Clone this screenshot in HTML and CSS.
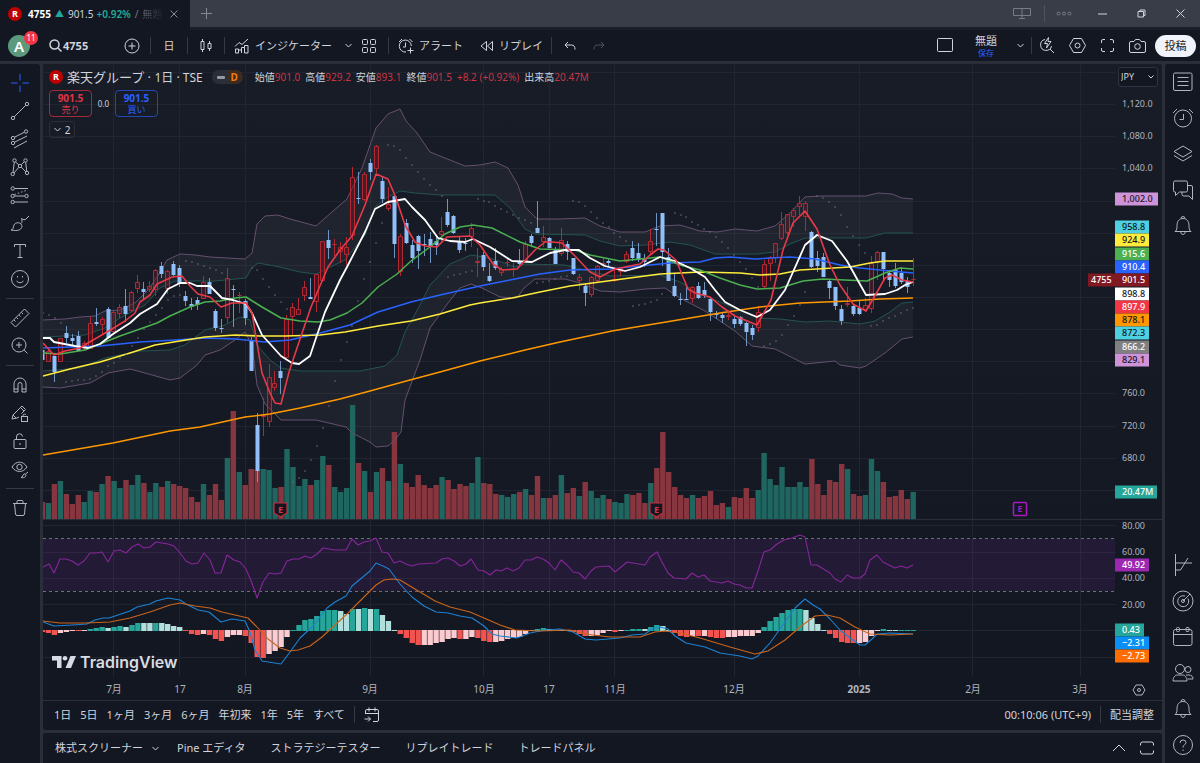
FILE: index.html
```html
<!DOCTYPE html>
<html lang="ja">
<head>
  <meta charset="UTF-8">
  <meta name="viewport" content="width=device-width, initial-scale=1.0">
  <title>4755 901.5 +0.92%</title>
  <link rel="stylesheet" href="styles.css">
</head>
<body>

<header class="tabbar">
  <div class="tab">
    <span class="logo-r">R</span>
    <b>4755</b>
    <span class="tab-up">▲</span>
    <span class="tab-price">901.5</span>
    <span class="tab-change">+0.92%</span>
    <span class="tab-slash">/</span>
    <span class="tab-name">無題</span>
    <button class="tab-close" aria-label="閉じる"><svg width="8" height="8" viewBox="0 0 8 8"><path d="M.5.5l7 7M7.5.5l-7 7"/></svg></button>
  </div>
  <button class="tab-add" aria-label="新しいタブ"><svg width="11" height="11" viewBox="0 0 11 11"><path d="M5.5 0v11M0 5.5h11"/></svg></button>
  <div class="window-buttons">
    <button class="wb-monitor" aria-label="モニター"><svg width="20" height="13" viewBox="0 0 20 13"><path d="M1.5 1.500h17v7h-17zM10 1.500v10M7 11.500h6"/></svg></button>
    <span class="wb-sep"></span>
    <button class="wb-more" aria-label="メニュー"><svg width="16" height="5" viewBox="0 0 16 5"><circle cx="2.500" cy="2.500" r="1.500"/><circle cx="8" cy="2.500" r="1.500"/><circle cx="13.500" cy="2.500" r="1.500"/></svg></button>
    <button class="wb" aria-label="最小化"><svg width="9" height="9" viewBox="0 0 9 9"><path d="M0 5h9"/></svg></button>
    <button class="wb" aria-label="元に戻す"><svg width="9" height="9" viewBox="0 0 9 9"><path d="M1 2.500h5.500V8H1zM3 2.500V1h5v5.500H6.500"/></svg></button>
    <button class="wb" aria-label="ウィンドウを閉じる"><svg width="9" height="9" viewBox="0 0 9 9"><path d="M.5.5l8 8M8.500.5l-8 8"/></svg></button>
  </div>
</header>

<nav class="toolbar">
  <div class="avatar-box"><span class="avatar">A</span><span class="avatar-count">11</span></div>
  <button class="search"><svg width="13" height="13" viewBox="0 0 13 13" stroke-width="1.500"><circle cx="5.500" cy="5.500" r="4.500"/><path d="M9 9l3.500 3.500"/></svg><b>4755</b></button>
  <button class="tb" aria-label="比較"><svg width="16" height="16" viewBox="0 0 16 16"><circle cx="8" cy="8" r="7"/><path d="M8 4.500v7M4.500 8h7"/></svg></button>
  <span class="sep"></span>
  <button class="tb">日</button>
  <span class="sep"></span>
  <button class="tb" aria-label="ローソク足"><svg width="12" height="15" viewBox="0 0 12 15"><path d="M1 3.500h3v8H1zM2.500 1v2.500M2.500 11.500V14M8 5.500h3v5H8zM9.500 3v2.500M9.500 10.500V13"/></svg></button>
  <span class="sep"></span>
  <button class="tb-text"><svg width="16" height="16" viewBox="0 0 16 16"><path d="M1.500 15v-4h3v4zM4.500 15v-3h3v3M7.500 15V9.500h3V15M10.500 15V7.500H14V15zM1 8.500l4-4 3 2L14 1"/></svg>インジケーター</button>
  <button class="tb-chevron" aria-label="お気に入り"><svg width="7" height="5" viewBox="0 0 7 5"><path d="M.5 1l3 3 3-3"/></svg></button>
  <button class="tb-grid" aria-label="テンプレート"><svg width="14" height="14" viewBox="0 0 14 14"><rect x=".5" y=".5" width="5" height="5" rx="1"/><rect x="8.500" y=".5" width="5" height="5" rx="1"/><rect x=".5" y="8.500" width="5" height="5" rx="1"/><rect x="8.500" y="8.500" width="5" height="5" rx="1"/></svg></button>
  <span class="sep"></span>
  <button class="tb-text"><svg width="16" height="16" viewBox="0 0 16 16"><path d="M13.300 8A6 6 0 1 0 8 14M7.500 4.500V9H5M12.500 9.500v6M9.500 12.500h6M1 4l3-3M14.500 4l-3-3"/></svg>アラート</button>
  <button class="tb-text"><svg width="14" height="12" viewBox="0 0 14 12"><path d="M6.500 1.500v9L1 6zM12.500 1.500v9L7.500 6z"/></svg>リプレイ</button>
  <span class="sep"></span>
  <button class="tb" aria-label="元に戻す"><svg width="12" height="9" viewBox="0 0 12 9"><path d="M4 1L1 4l3 3M1 4h6.500Q11 4 11 8.500"/></svg></button>
  <button class="tb-redo" aria-label="やり直す"><svg width="12" height="9" viewBox="0 0 12 9"><path d="M8 1l3 3-3 3M11 4H4.500Q1 4 1 8.500"/></svg></button>

  <div class="toolbar-right">
    <button class="tb" aria-label="レイアウト"><svg width="16" height="15" viewBox="0 0 16 15"><rect x=".5" y=".5" width="15" height="13" rx="1"/></svg></button>
    <button class="layout-name"><span>無題</span><span class="save">保存</span></button>
    <button class="tb-chevron" aria-label="レイアウト一覧"><svg width="7" height="5" viewBox="0 0 7 5"><path d="M.5 1l3 3 3-3"/></svg></button>
    <span class="sep"></span>
    <button class="tbr" aria-label="クイック検索"><svg width="16" height="17" viewBox="0 0 16 17"><path d="M6 2.500a5.500 5.500 0 1 0 6.500 6.500M11 12l4 4M9.500.5L5.500 6.500h3l-1 4.500 4.500-6.500H9z"/></svg></button>
    <button class="tbr" aria-label="設定"><svg width="17" height="15" viewBox="0 0 17 15"><path d="M4.500.5h8l4 7-4 7h-8l-4-7z"/><circle cx="8.500" cy="7.500" r="2.500"/></svg></button>
    <button class="tbr" aria-label="全画面"><svg width="13" height="13" viewBox="0 0 13 13"><path d="M.5 4V2Q.5.5 2 .5h2M9 .5h2Q12.500.5 12.500 2v2M12.500 9v2q0 1.500-1.500 1.500H9M4 12.500H2Q.5 12.500.5 11V9"/></svg></button>
    <button class="tbr" aria-label="スナップショット"><svg width="17" height="14" viewBox="0 0 17 14"><path d="M2 2.500h3l1.500-2h4l1.500 2h3q1.500 0 1.500 1.500v8q0 1.500-1.500 1.500H2Q.5 13.500.5 12V4Q.5 2.500 2 2.500z"/><circle cx="8.500" cy="7.500" r="2.800"/></svg></button>
    <button class="publish">投稿</button>
  </div>
</nav>

<div class="workspace">
  <aside class="drawing-tools">
    <button class="cross" aria-label="十字カーソル"><svg width="20" height="20" viewBox="0 0 20 20"><path d="M10 1v6.500M10 12.500V19M1 10h6.500M12.500 10H19"/></svg></button>
    <button aria-label="トレンドライン"><svg width="20" height="20" viewBox="0 0 20 20"><circle cx="3" cy="17" r="1.700"/><circle cx="17" cy="3" r="1.700"/><path d="M4.200 15.800L15.800 4.200"/></svg></button>
    <button aria-label="フィボナッチ"><svg width="20" height="20" viewBox="0 0 20 20"><circle cx="3" cy="9" r="1.700"/><circle cx="16" cy="2.500" r="1.700"/><circle cx="3" cy="14" r="1.700"/><path d="M4.500 8.200l10-5M4.500 13.200L17 7M4 19l13-7"/></svg></button>
    <button aria-label="パターン"><svg width="20" height="20" viewBox="0 0 20 20"><circle cx="4.500" cy="3.500" r="1.700"/><circle cx="15.500" cy="3.500" r="1.700"/><circle cx="2.700" cy="17" r="1.700"/><circle cx="10" cy="9" r="1.700"/><circle cx="17" cy="16" r="1.700"/><path d="M4.300 5.200L3 15.300M5.500 5l3.300 2.800M14.300 4.700l-3 3M15.700 5.200l1 9M4 16l4.800-5.700M11.300 10.200l4.500 4.600"/></svg></button>
    <button aria-label="予測"><svg width="20" height="20" viewBox="0 0 20 20"><circle cx="2.700" cy="3.500" r="1.700"/><circle cx="2.700" cy="11" r="1.700"/><circle cx="2.700" cy="17" r="1.700"/><circle cx="16.500" cy="11" r="1.700"/><path d="M4.500 3.500H18M4.500 11h10M4.500 17H18"/><path d="M4.500 9.500L16 5.500" stroke-dasharray="1.500 2"/></svg></button>
    <button aria-label="ブラシ"><svg width="20" height="20" viewBox="0 0 20 20"><path d="M1 17c2.500-.5 2-2.500 3-5 1-2.500 5-3 7-1s.5 5-2 6c-2.500.8-5 .5-8 0zM11 10.500c1.500-1 1-3.500.5-5 1.500 1 3.500 2 4.500.5L19 3"/></svg></button>
    <button aria-label="テキスト"><svg width="20" height="20" viewBox="0 0 20 20"><path d="M4.500 6V3.500h11V6M10 3.500v13M7.500 16.500h5"/></svg></button>
    <button aria-label="絵文字"><svg width="20" height="20" viewBox="0 0 20 20"><circle cx="10" cy="10" r="8.500"/><path d="M6.500 12q3.500 3.500 7 0M7.500 7v1.500M12.500 7v1.500"/></svg></button>
    <hr>
    <button aria-label="ものさし"><svg width="20" height="20" viewBox="0 0 20 20"><path d="M1 14.500L14.500 1 19 5.500 5.500 19zM4 12l1.500 1.500M6.500 9.500L8 11M9 7l1.500 1.500M11.500 4.500L13 6"/></svg></button>
    <button aria-label="ズームイン"><svg width="20" height="20" viewBox="0 0 20 20"><circle cx="9" cy="9" r="7"/><path d="M14 14l3.500 3.500M9 6v6M6 9h6"/></svg></button>
    <hr>
    <button aria-label="マグネット"><svg width="20" height="20" viewBox="0 0 20 20"><path d="M4 17V9a6 6 0 0 1 12 0v8h-4V9.500a2 2 0 0 0-4 0V17zM4 14h4M12 14h4"/></svg></button>
    <button aria-label="描画モードを維持"><svg width="20" height="20" viewBox="0 0 20 20"><path d="M9 14l-2 1-5 1 1-4 9-9 3.500 3.500-4 4M10.500 4.500L14 8M3 12l3 3"/><rect x="11.500" y="13.500" width="6" height="5"/><path d="M13 13.500v-1.500a1.700 1.700 0 0 1 3 0"/></svg></button>
    <button aria-label="ロック"><svg width="20" height="20" viewBox="0 0 20 20"><rect x="4" y="8.500" width="12" height="9" rx="1"/><path d="M6.500 8.500V6a3 3 0 0 1 6-.5M10 12v2"/></svg></button>
    <button aria-label="描画を隠す"><svg width="20" height="20" viewBox="0 0 20 20"><path d="M2 8c4-6.500 11-6.500 15 0-4 6-11 6-15 0z"/><circle cx="9.500" cy="8" r="2.700"/><path d="M11 18.500c2 0 1.500-3 3-3.500s2.500 1 1.500 2.500-3 1.300-4.500 1zM15.500 15l2.500-2"/></svg></button>
    <hr>
    <button aria-label="削除"><svg width="20" height="20" viewBox="0 0 20 20"><path d="M3 5.500h14M7 5V3.500q0-1 1-1h4q1 0 1 1V5M4.500 5.500l1 10.500q.2 1.500 1.500 1.500h6q1.300 0 1.500-1.500l1-10.500"/></svg></button>
  </aside>

  <main class="center">
    <section class="chart-panel">
      <svg id="chart" class="chart"></svg>

      <div class="legend">
        <div class="legend-title">
          <span class="logo-r">R</span>
          <h1>楽天グループ · <span>1日 · TSE</span></h1>
          <span class="status"><i></i><b>D</b></span>
          <span class="ohlc">始値<em>901.0</em></span>
          <span class="ohlc">高値<em>929.2</em></span>
          <span class="ohlc">安値<em>893.1</em></span>
          <span class="ohlc">終値<em>901.5</em></span>
          <span class="ohlc"><em>+8.2 (+0.92%)</em></span>
          <span class="ohlc">出来高<em>20.47M</em></span>
        </div>
        <div class="trade">
          <button class="sell"><b>901.5</b><span>売り</span></button>
          <span class="spread">0.0</span>
          <button class="buy"><b>901.5</b><span>買い</span></button>
        </div>
        <button class="collapse"><svg width="7" height="5" viewBox="0 0 7 5"><path d="M.5 1l3 3 3-3"/></svg>2</button>
      </div>

      <div class="currency">
        <select aria-label="通貨"><option>JPY</option></select>
        <svg width="6" height="4" viewBox="0 0 6 4"><path d="M.5.5L3 3 5.500.5"/></svg>
      </div>

      <div class="brand">
        <svg width="24" height="14" viewBox="0 0 24 14"><path d="M0 1h9.500v12H5V5.500H0zM18.500 1H24l-5 12h-5.500z"/><circle cx="13" cy="3.300" r="2.300"/></svg>
        TradingView
      </div>

      <div class="range-bar">
        <button>1日</button>
        <button>5日</button>
        <button>1ヶ月</button>
        <button>3ヶ月</button>
        <button>6ヶ月</button>
        <button>年初来</button>
        <button>1年</button>
        <button>5年</button>
        <button>すべて</button>
        <span class="sep"></span>
        <button aria-label="日付へ移動"><svg width="16" height="16" viewBox="0 0 16 16"><path d="M1.500 7V4Q1.500 2.500 3 2.500h10q1.500 0 1.500 1.500v9q0 1.500-1.500 1.500H9M1.500 6.500h13M5 .5v4M11 .5v4M.5 12h6M4 9.500L6.500 12 4 14.500"/></svg></button>
        <button class="clock">00:10:06 (UTC+9)</button>
        <span class="sep"></span>
        <button>配当調整</button>
      </div>
    </section>

    <footer class="bottom-panel">
      <button class="screener">株式スクリーナー<svg width="7" height="5" viewBox="0 0 7 5"><path d="M.5 1l3 3 3-3"/></svg></button>
      <button>Pine エディタ</button>
      <button>ストラテジーテスター</button>
      <button>リプレイトレード</button>
      <button>トレードパネル</button>
      <button class="panel-up" aria-label="パネルを開く"><svg width="14" height="8" viewBox="0 0 14 8"><path d="M1 7l6-6 6 6"/></svg></button>
      <button aria-label="パネルを最大化"><svg width="14" height="14" viewBox="0 0 14 14"><path d="M.5 4.500V3Q.5 1 2.500 1h9q2 0 2 2v1.500M13.500 9.500V11q0 2-2 2h-9q-2 0-2-2V9.500"/></svg></button>
    </footer>
  </main>

  <aside class="widgets">
    <button aria-label="ウォッチリスト"><svg width="22" height="22" viewBox="0 0 22 22"><rect x="1.500" y="2" width="18.500" height="17.500" rx="1.500"/><path d="M5.500 6.500h11M5.500 10.500h11M5.500 14.500h11"/></svg></button>
    <button aria-label="アラート"><svg width="22" height="22" viewBox="0 0 22 22"><circle cx="11" cy="11.500" r="8.500"/><path d="M11.500 7v5.500H7.500M1 6l4-4M21 6l-4-4"/></svg></button>
    <button aria-label="オブジェクトツリー"><svg width="22" height="22" viewBox="0 0 22 22"><path d="M2 8.500L11 3l9 5.500-9 5.500zM2 12.500l9 5.500 9-5.500"/></svg></button>
    <button aria-label="チャット"><svg width="22" height="22" viewBox="0 0 22 22"><path d="M3 2h11q1.500 0 1.500 1.500v8q0 1.500-1.500 1.500H7.500l-4 3.500V13H3q-1.500 0-1.500-1.500v-8Q1.500 2 3 2zM15.500 6.500H19q1.500 0 1.500 1.500v12.500L17 17h-5q-2 0-2-1.500V13"/></svg></button>
    <button aria-label="通知"><svg width="22" height="22" viewBox="0 0 22 22"><path d="M3 16.500c2-1.500 2-3.500 2-6C5 6 7.500 3.500 11 3.500s6 2.500 6 7c0 2.500 0 4.500 2 6zM9 3.500q0-2 2-2t2 2M8.500 16.500q.5 3 2.500 3t2.500-3"/></svg></button>
    <span class="widgets-space"></span>
    <button aria-label="スーパーチャート"><svg width="22" height="22" viewBox="0 0 22 22"><path d="M3.500 0v22M3.500 9H20M3.500 16h5L16 4"/></svg></button>
    <button aria-label="レーダー"><svg width="22" height="22" viewBox="0 0 22 22"><circle cx="11" cy="11" r="10"/><path d="M16 8.500a5.500 5.500 0 1 1-3-2.500M11 11l7-7"/><circle cx="11" cy="11" r="1.500"/></svg></button>
    <button aria-label="カレンダー"><svg width="22" height="22" viewBox="0 0 22 22"><rect x="1.500" y="3.500" width="18.500" height="16" rx="2"/><path d="M1.500 8.500H20"/><rect x="4.500" y="1.500" width="3" height="4" rx="1"/><rect x="14" y="1.500" width="3" height="4" rx="1"/></svg></button>
    <button aria-label="コミュニティ"><svg width="22" height="22" viewBox="0 0 22 22"><circle cx="8" cy="7" r="4.500"/><circle cx="16" cy="7.500" r="3"/><path d="M1 19c0-3.500 2-6 4.500-6h5c2.500 0 4.500 2.500 4.500 6zM14 13h3c2.500 0 4 1.500 4 4h-5.500"/></svg></button>
    <button aria-label="お知らせ"><svg width="22" height="22" viewBox="0 0 22 22"><path d="M3 16.500c2-1.500 2-3.500 2-6C5 6 7.500 3.500 11 3.500s6 2.500 6 7c0 2.500 0 4.500 2 6zM9 3.500q0-2 2-2t2 2M8.500 16.500q.5 3 2.500 3t2.500-3"/></svg></button>
    <button aria-label="ヘルプ"><svg width="22" height="22" viewBox="0 0 22 22"><circle cx="11" cy="11" r="9.500"/><path d="M8 9q0-3 3-3t3 2.500q0 1.500-1.500 2.300T11 13.500M11 15.500V17"/></svg></button>
  </aside>
</div>

<script src="chart.js"></script>
</body>
</html>
```

FILE: styles.css
```css
* {
  box-sizing: border-box;
}
body {
  margin: 0;
  min-height: 100vh;
  display: flex;
  flex-direction: column;
  background: #2a2e39;
  color: #d1d4dc;
  font-family: "Noto Sans", "Noto Sans CJK JP", sans-serif;
  font-size: 11px;
  line-height: 16px;
}
button {
  display: flex;
  align-items: center;
  justify-content: center;
  flex: none;
  margin: 0;
  padding: 0;
  border: none;
  background: none;
  color: inherit;
  font: inherit;
  white-space: nowrap;
  cursor: pointer;
}
svg {
  display: block;
  flex: none;
  fill: none;
  stroke: currentColor;
}
.sep {
  flex: none;
  width: 1px;
  height: 17px;
  background: #363a45;
}
.logo-r {
  flex: none;
  width: 14px;
  height: 14px;
  border-radius: 50%;
  background: #bf0000;
  color: #fff;
  font-size: 9px;
  font-weight: 700;
  line-height: 14px;
  text-align: center;
}

/* window tabs */
.tabbar {
  display: flex;
  height: 30px;
  background: #383d47;
  border-bottom: 3px solid #1a1e28;
}
.tab {
  display: flex;
  align-items: center;
  gap: 4px;
  width: 190px;
  height: 30px;
  padding: 0 12px 3px 8px;
  background: #131722;
  color: #fff;
  font-size: 10px;
}
.tab b {
  margin-left: 2px;
}
.tab-up {
  color: #26a69a;
  font-size: 9px;
}
.tab-price {
  color: #d1d4dc;
}
.tab-change {
  margin-left: -1px;
  color: #22ab94;
  font-weight: 600;
}
.tab-slash {
  color: #787b86;
}
.tab-name {
  background: linear-gradient(to right, #5d606b, #1e222d);
  -webkit-background-clip: text;
  background-clip: text;
  color: transparent;
}
.tab-close {
  margin-left: auto;
  color: #868993;
}
.tab-add {
  width: 32px;
  color: #868993;
}
.window-buttons {
  display: flex;
  align-items: center;
  margin-left: auto;
}
.wb-monitor {
  width: 44px;
  color: #787b86;
}
.wb-sep {
  width: 1px;
  height: 17px;
  background: #50535e;
}
.wb-more {
  width: 38px;
  color: #787b86;
}
.wb {
  width: 39px;
  height: 27px;
  color: #d1d4dc;
}

/* top toolbar */
.toolbar {
  display: flex;
  align-items: center;
  height: 31px;
  margin-bottom: 3px;
  background: #131722;
}
.avatar-box {
  position: relative;
  width: 40px;
  padding-left: 8px;
}
.avatar {
  display: block;
  width: 22px;
  height: 22px;
  border-radius: 50%;
  background: #5b9a7d;
  color: #fff;
  font-size: 15px;
  font-weight: 600;
  line-height: 22px;
  text-align: center;
}
.avatar-count {
  position: absolute;
  top: -4px;
  left: 24px;
  width: 14px;
  height: 14px;
  border-radius: 50%;
  background: #f23645;
  color: #fff;
  font-size: 8px;
  line-height: 14px;
  text-align: center;
}
.search {
  justify-content: flex-start;
  gap: 1px;
  width: 74px;
  padding-left: 9px;
}
.tb {
  width: 36px;
  height: 30px;
}
.tb-text {
  gap: 5px;
  padding: 0 8px 0 9px;
}
.tb-chevron {
  width: 16px;
}
.tb-grid {
  width: 26px;
  margin-right: 6px;
}
.tb-redo {
  width: 22px;
  color: #50535e;
}
.toolbar-right {
  display: flex;
  align-items: center;
  margin-left: auto;
  padding-right: 4px;
}
.toolbar-right .tb-chevron {
  width: 22px;
}
.layout-name {
  flex-direction: column;
  width: 46px;
  line-height: 13px;
}
.save {
  color: #2962ff;
  font-size: 8px;
  line-height: 11px;
}
.tbr {
  width: 30px;
}
.publish {
  width: 41px;
  height: 22px;
  margin-left: 3px;
  border-radius: 11px;
  background: #f0f3fa;
  color: #131722;
}

/* main area */
.workspace {
  display: flex;
  flex: 1;
  gap: 3px;
}
.drawing-tools,
.widgets {
  display: flex;
  flex-direction: column;
  align-items: center;
  background: #131722;
  color: #b2b5be;
}
.drawing-tools {
  width: 40px;
  padding: 5px 1px 0 0;
  border-radius: 0 3px 0 0;
}
.drawing-tools button {
  width: 39px;
  height: 28px;
}
.drawing-tools hr {
  width: 28px;
  height: 1px;
  margin: 5px 0;
  border: none;
  background: #363a45;
}
.drawing-tools .cross {
  color: #2962ff;
}
.widgets {
  width: 35px;
  border-radius: 3px 0 0 0;
}
.widgets button {
  width: 35px;
  height: 36px;
}
.widgets-space {
  flex: 1;
}
.center {
  display: flex;
  flex-direction: column;
  flex: 1;
  gap: 3px;
  min-width: 0;
}

/* chart */
.chart-panel {
  position: relative;
  display: flex;
  flex-direction: column;
  border-radius: 3px;
  background: #131722;
}
.chart {
  width: 100%;
  height: 636px;
  border-radius: 3px;
  background: linear-gradient(#181c27, #131722);
}
.legend {
  position: absolute;
  top: 4px;
  left: 6px;
}
.legend-title {
  display: flex;
  align-items: center;
  gap: 5px;
  height: 18px;
  margin-bottom: 4px;
  font-size: 10px;
  white-space: nowrap;
}
.legend-title h1 {
  margin: 0 4px 0 -1px;
  font-size: 13px;
  font-weight: 400;
}
.legend-title h1 span {
  font-size: 12px;
}
.status {
  display: flex;
  align-items: center;
  justify-content: space-between;
  width: 31px;
  height: 14px;
  margin-right: 7px;
  padding: 0 5px;
  border-radius: 7px;
  background: linear-gradient(to right, #2a2e39 50%, #3a2c21 50%);
}
.status i {
  width: 8px;
  height: 3px;
  border-radius: 1px;
  background: #9598a1;
}
.status b {
  color: #f57c00;
}
.ohlc em {
  color: #c93545;
  font-style: normal;
}
.trade {
  display: flex;
  align-items: center;
  margin-bottom: 4px;
}
.sell,
.buy {
  flex-direction: column;
  width: 43px;
  height: 27px;
  border: 1px solid #a32a38;
  border-radius: 4px;
  color: #e03444;
  font-size: 9px;
  line-height: 11px;
}
.sell b,
.buy b {
  font-size: 10px;
}
.buy {
  border-color: #2148b3;
  color: #2962ff;
}
.spread {
  width: 23px;
  font-size: 8px;
  text-align: center;
}
.collapse {
  gap: 4px;
  width: 26px;
  height: 17px;
  border: 1px solid #2a2e39;
  border-radius: 3px;
  font-size: 10px;
}
.currency {
  position: absolute;
  top: 3px;
  right: 4px;
}
.currency select {
  display: block;
  width: 40px;
  height: 20px;
  padding: 0 2px;
  border: 1px solid #2f333f;
  border-radius: 3px;
  background: #131722;
  color: #d1d4dc;
  font: inherit;
  font-size: 9px;
  appearance: none;
}
.currency svg {
  position: absolute;
  top: 8px;
  right: 4px;
}
.brand {
  position: absolute;
  top: 586px;
  left: 9px;
  display: flex;
  align-items: center;
  gap: 4px;
  color: #d8dbe3;
  font-family: Inter, sans-serif;
  font-size: 16px;
  font-weight: 600;
  line-height: 24px;
}
.brand svg {
  fill: currentColor;
  stroke: none;
}
.range-bar {
  display: flex;
  align-items: center;
  gap: 9px;
  height: 30px;
  padding: 0 8px 2px 11px;
  border-top: 1px solid #2a2e39;
}
.range-bar .clock {
  margin-left: auto;
}

/* bottom tabs */
.bottom-panel {
  display: flex;
  align-items: center;
  flex: 1;
  gap: 25px;
  min-height: 30px;
  padding: 0 8px 0 12px;
  border-radius: 3px 3px 0 0;
  background: #131722;
}
.screener {
  gap: 9px;
  margin-right: -7px;
}
.panel-up {
  margin-left: auto;
  margin-right: -11px;
}

/* svg parts */
.grid {
  stroke: #212531;
}
.dots circle {
  fill: #6d707b;
  stroke: none;
}
.band {
  fill: rgba(145, 160, 160, 0.07);
  stroke: none;
}
.line {
  stroke-linejoin: round;
}
.vol-up {
  fill: #1f6560;
  stroke: none;
}
.vol-down {
  fill: #87363f;
  stroke: none;
}
.candle-up {
  fill: rgba(128, 20, 34, 0.4);
  stroke: #b22833;
}
.candle-down {
  fill: #90bff9;
  stroke: none;
}
.wick-down {
  stroke: #6f94c2;
}
.chart text {
  stroke: none;
  fill: #b2b5be;
  font-size: 9px;
}
.chart .tag-text {
  font-weight: 500;
}
.chart .time {
  font-size: 10px;
  text-anchor: middle;
}
.chart .year {
  font-weight: 700;
}
.chart .event {
  font-weight: 700;
  text-anchor: middle;
}
```

FILE: chart.js
```js
const svg = document.getElementById("chart");
const RIGHT = 1162, TOP = 64, HEIGHT = 636, AXIS = 1115;
const width = svg.clientWidth;
const LEFT = RIGHT - width;
svg.setAttribute("viewBox", `${LEFT} ${TOP} ${width} ${HEIGHT}`);

const barX = i => 42.4 + i * 5.964;
let out = "";

// [direction, high, body top, body bottom, low]
const candles = `d350,350,360,360 u348,351,362,362 d356,356,372,382 u338,338,362,362 d326,333,338,343 d334,338,341,345
d331,336,351,351 u341,343,348,350 u317,323,349,349 d308,322,324,326 u317,319,325,334 d307,309,338,338
u310,312,332,334 u304,307,314,318 d289,306,314,322 u291,292,311,312 u275,282,289,293 d282,289,292,299
u281,286,290,292 u269,270,290,296 d262,266,274,278 u270,271,289,294 d261,264,275,277 d265,268,284,287
d291,296,301,306 d298,304,307,310 d297,300,305,310 u276,282,299,299 d278,282,294,294 d309,311,328,331
d319,328,329,333 u268,278,318,323 d285,289,290,327 u292,295,296,313 d299,301,318,325 d337,341,371,371
d413,425,471,482 u398,415,417,436 u364,377,422,427 u371,383,388,391 d361,371,378,394 u315,319,358,358
u303,307,317,335 u298,309,315,315 u281,287,296,301 d278,297,299,299 u274,274,302,312 u241,241,281,282
d230,240,248,259 u239,244,245,256 u242,247,252,263 u237,247,255,265 u167,177,236,240 d172,198,199,204
u172,174,200,201 d159,163,172,180 u145,146,169,173 d177,181,199,203 u187,204,209,211 d194,196,244,258
u234,236,272,276 d219,223,243,244 d240,245,258,263 d235,236,251,269 d234,244,245,256 d232,239,247,263
d237,241,245,255 u217,231,235,242 d199,212,225,227 d215,216,233,234 d237,242,250,253 d238,243,244,251
u223,228,237,247 u248,261,263,277 d252,255,267,271 d263,276,281,282 d248,261,268,270 u267,269,273,276
u257,262,263,267 u263,269,270,277 d249,262,264,265 u241,244,261,261 d234,236,243,247 d201,228,233,233
u226,237,242,247 d237,238,248,248 d247,250,264,264 u228,240,254,256 d241,244,252,260 d258,258,274,275
u274,277,281,290 d283,286,293,306 u276,277,295,297 u265,266,281,283 u258,263,266,268 d258,261,263,267
u267,279,281,282 u267,268,272,276 u251,254,262,263 d241,248,258,261 d243,253,260,262 d254,258,262,267
u229,241,252,254 d213,229,230,246 d213,213,252,266 d248,257,281,281 d274,286,296,297 d293,299,300,305
d287,299,300,300 u286,287,299,303 d282,286,298,299 d282,290,295,298 d297,299,312,321 d311,314,315,319
d313,315,318,323 u313,315,317,320 d316,319,324,328 d316,317,324,326 d322,323,332,346 d325,328,335,340
u306,312,328,332 u260,264,287,288 u256,257,264,281 u243,243,258,263 u212,224,239,240 u214,214,233,235
u208,210,217,227 u196,203,207,215 u201,203,217,231 d231,232,267,268 d251,258,266,272 d253,257,277,277
d279,281,288,299 d287,287,306,310 d305,309,321,325 u287,303,305,307 d304,306,314,316 d300,308,314,315
u298,305,310,312 u256,263,309,313 u251,252,262,280 d252,252,269,280 d270,273,280,287 d263,270,286,288
d267,273,282,284 d277,281,287,293 u258,279,280,286`.split(/\s+/);

const volumes = `r502 g503 r484 g481 r494 r504 r495 g502 g491 r492 g484 r476 g481 g488 r480 g485 g475 r483 g492 g483
r487 g481 r484 r486 r488 r497 r502 g484 r495 r484 r500 g458 r411 g472 r485 r469 r470 g469 g470 g488
r487 g449 g467 g486 g479 r485 g480 g456 r465 g487 g492 g488 g405 r463 g471 r492 g472 r468 g481 r432
g464 r483 r487 r475 r485 r488 r485 g477 r480 r489 r484 r486 g483 g457 r483 r484 r494 g495 g497 g494
r492 g489 r495 r476 g498 r498 r495 g475 r493 r488 g496 r482 g491 g498 g495 r499 g502 g503 g494 r495
r493 r503 g483 r468 r432 r472 r487 r495 r498 g495 r498 r496 r491 r505 r503 g507 r497 r498 r488 r498
g490 g453 g479 g485 g467 g487 g487 g482 g487 r459 r484 r495 r480 r482 r464 g469 r494 r496 g495 g459
g471 r482 r497 r496 r490 r499 g492`.split(/\s+/);

// T/t: above zero rising/falling, R/p: below zero falling/rising
const hist = `R2 R3 R5 p3 p2 p1 R1 p1 T2 T3 T4 t3 T4 T5 t4 T6 T8 t8 t8 T8 t8 t7 t5 t4 R1 R4 R5 p4 R5 R9 R11 p7 p5 p5
R6 R13 R27 R28 p24 p21 p17 p7 T1 T6 T11 T12 T15 T20 T21 T21 t20 t17 T22 t22 T23 t22 T22 t16 t10 t1
R4 R8 R13 R15 p15 p15 p13 p12 p9 p8 R9 p9 p7 R8 R11 R12 p12 p11 p9 p8 p7 p4 p1 T2 T3 t2 t1 t1 p1 R2
R4 R6 p6 p5 p3 p1 R2 p1 T1 T2 T2 t2 T4 T6 t5 t1 R3 R6 R7 p6 R6 p6 R7 R8 R8 p7 p7 p6 p6 p6 p3 T4 T10
T14 T18 T21 T22 T22 t21 t13 t7 t1 R4 R8 R12 R13 R13 p13 p12 p6 p1 T2 t1 t1 T1 T1 T1`.split(/\s+/);

const upper = "43,320 65,319 80,317 95,316 105,311 120,310 135,303 148,290 157,277 167,260 180,254 195,255 210,257 245,259 252,253 257,224 265,216 278,215 290,219 316,226 340,205 347,199 362,168 376,128 388,114 400,109 406,121 417,133 430,152 445,158 465,166 480,165 495,162 508,168 518,185 525,207 537,219 560,219 585,218 600,226 620,232 645,232 660,226 680,225 700,231 717,232 735,229 757,231 775,226 790,213 805,197 820,196 866,196 878,193 892,194 902,198 913,199";
const lower = "43,387 60,388 90,383 108,373 130,369 145,373 170,380 180,378 197,365 205,355 220,350 235,340 245,332 252,345 257,385 265,404 281,420 316,420 346,427 352,433 370,442 376,447 388,446 395,440 401,432 405,400 420,360 430,328 448,303 460,288 471,284 482,288 500,297 517,298 524,288 535,279 565,279 580,283 600,291 620,292 645,289 665,288 680,298 705,311 735,331 752,346 775,349 805,364 835,361 840,365 860,368 866,366 885,353 902,339 913,337";
const upper1 = "43,337 85,335 105,328 120,318 145,305 160,288 175,281 215,281 246,278 251,269 258,263 275,266 300,272 316,274 345,260 365,235 376,206 388,197 400,191 415,193 440,195 495,195 510,208 525,229 535,234 585,235 600,241 620,246 645,245 670,242 690,245 715,254 757,254 775,252 790,244 805,238 866,238 885,233 913,233";
const lower1 = "43,371 80,368 105,358 140,351 170,350 185,345 205,330 225,325 240,317 250,320 257,345 270,360 281,368 300,371 340,371 360,371 385,366 397,355 405,332 420,305 430,285 450,264 471,255 490,258 515,267 525,264 565,265 585,270 610,276 660,275 680,282 700,294 735,308 757,318 780,319 805,322 830,321 860,324 875,321 890,312 902,303 913,302";

const averages = [
  ["#ff9800", 1.5, "43,455 113,443 170,431 200,427 245,417 270,414 300,408 340,399 370,391 410,380 440,372 480,361 525,350 560,342 612,331 660,323 720,313 760,307 800,303 850,301 880,299 913,298"],
  ["#2962ff", 1.5, "43,348 70,347 100,346 140,342 175,340 205,338 235,339 265,342 290,340 320,333 350,325 378,312 411,302 440,295 480,286 510,280 540,274 570,270 610,269 640,266 670,263 700,262 715,258 730,257 755,259 790,257 815,259 840,265 860,268 890,271 913,273"],
  ["#ffeb3b", 1.6, "43,376 70,369 100,362 130,353 155,345 180,341 205,337 235,335 260,336 285,336 320,335 345,332 378,326 411,321 440,314 470,305 480,303 512,298 540,292 570,286 600,282 630,278 660,274 700,272 740,273 760,275 780,274 800,270 850,267 870,263 885,261 913,261"],
  ["#4caf50", 1.5, "43,353 60,354 85,350 100,344 120,336 140,329 157,323 170,316 190,307 205,302 220,301 235,298 246,297 262,307 281,318 300,321 318,322 330,320 347,313 362,303 378,287 397,274 411,261 430,247 445,234 460,227 473,225 492,228 520,242 540,249 575,250 590,255 620,261 640,259 660,257 680,265 700,270 720,278 740,285 757,289 780,288 803,281 823,279 867,281 885,273 900,268 913,269"],
  ["#ffffff", 1.8, "43,338 50,338 54,342 75,346 88,348 100,344 113,334 130,323 140,314 157,304 168,289 180,283 190,283 197,286 210,286 222,298 233,300 246,304 252,313 262,335 281,356 292,363 299,364 310,356 316,338 325,312 340,280 347,267 365,232 375,209 388,202 405,199 412,207 425,220 438,238 450,241 465,242 473,239 490,247 512,261 532,262 550,253 565,250 579,250 590,258 605,266 625,271 640,267 660,257 675,261 690,268 705,277 715,290 725,302 740,310 757,317 770,310 785,290 805,245 817,235 832,241 847,261 866,295 885,294 897,290 905,285 913,282"],
  ["#e83a48", 1.6, "43,343 54,355 65,351 80,348 88,343 100,336 112,329 125,321 135,313 140,302 150,295 157,284 172,277 182,276 190,286 198,294 210,297 221,307 232,303 246,303 252,313 262,373 270,393 275,403 281,404 289,372 298,345 311,307 328,267 340,250 352,236 365,205 376,174 388,179 396,198 405,225 415,242 425,246 437,247 447,237 470,236 480,245 493,264 502,270 517,269 535,250 545,242 553,242 562,243 575,256 590,272 600,277 615,269 640,264 650,255 658,249 664,250 676,260 688,289 695,293 710,297 722,307 735,316 757,325 771,300 783,250 793,223 805,211 817,229 830,265 840,285 853,304 866,311 876,294 885,278 892,275 902,280 913,282"]
];

const sar = "43,313 49,315 55,318 61,323 66,382 72,381 78,380 84,380 90,379 96,376 102,372 108,366 114,363 120,358 126,354 132,346 138,338 144,329 150,322 156,315 162,308 168,300 174,296 180,295 186,261 192,262 198,264 204,266 210,268 216,270 222,273 252,268 257,270 263,279 269,287 275,295 281,302 287,309 293,482 299,478 305,471 311,460 317,446 323,428 329,406 335,381 341,360 347,342 352,326 358,301 364,279 370,262 376,243 382,223 388,145 394,146 400,150 406,158 412,165 418,172 424,179 430,185 436,190 442,196 448,277 454,275 460,274 466,272 472,271 478,199 484,201 489,202 495,206 501,209 507,212 513,215 519,218 525,220 531,223 537,283 543,282 549,281 555,279 561,277 567,276 573,201 579,202 585,206 591,212 597,218 603,223 609,227 614,233 620,237 626,241 633,306 639,305 645,304 651,302 657,300 662,294 675,213 681,215 686,217 692,222 698,225 704,229 710,232 716,237 722,242 728,248 734,255 740,262 746,269 752,278 758,287 764,346 770,344 776,341 782,335 788,325 794,316 800,305 805,292 817,196 823,198 829,202 835,207 841,215 847,227 853,236 859,245 865,253 871,326 877,325 883,321 889,318 895,316 901,313 907,310 913,308";

const rsi = "43,567 49,564 54,573 60,559 66,559 72,561 78,565 84,561 90,553 96,553 102,552 108,562 114,551 120,550 126,553 132,547 138,544 144,548 150,547 156,542 162,543 168,544 174,546 180,553 186,561 192,564 198,563 204,553 210,560 215,573 221,573 227,555 234,560 240,562 246,569 252,583 257,598 263,582 269,573 275,574 281,573 287,561 293,559 299,559 305,556 311,558 317,554 323,548 335,550 346,550 352,539 358,545 364,542 370,541 376,538 382,552 388,553 394,563 400,561 406,564 412,566 418,564 436,563 442,559 448,558 454,561 460,566 466,564 471,559 478,570 484,571 490,575 496,570 501,571 507,568 513,571 519,568 525,560 531,560 537,557 543,559 549,563 555,570 561,560 567,565 573,572 579,573 585,579 591,571 596,567 609,566 615,572 621,567 627,562 645,565 650,557 657,552 662,562 668,573 674,578 686,579 692,573 698,577 704,575 710,581 722,583 728,581 734,584 740,585 746,588 752,588 758,571 764,552 770,550 777,544 784,540 792,538 800,535 805,537 811,565 817,565 830,573 835,579 841,582 847,575 853,578 860,578 865,574 870,560 877,555 883,562 889,565 895,568 901,566 907,568 913,565";
const macd = "43,622 54,626 72,625 87,624 95,620 103,618 109,618 121,614 130,611 137,607 150,604 156,601 168,598 180,600 186,604 198,610 209,612 221,622 232,619 245,621 250,632 255,650 262,661 281,664 290,652 300,638 313,626 327,608 335,602 346,596 352,586 358,581 370,571 376,563 383,566 389,569 400,584 412,597 424,606 436,612 448,613 460,616 472,618 484,626 492,634 500,636 517,638 530,633 545,630 560,629 573,632 585,639 596,640 620,638 632,635 645,634 652,629 660,627 668,629 675,636 686,643 705,647 720,653 740,656 752,659 758,656 770,643 785,622 795,608 805,599 813,605 820,609 830,619 840,630 850,638 860,645 865,645 872,639 877,634 890,633 913,634";
const signal = "43,621 60,623 85,623 110,622 130,618 150,612 170,605 180,603 195,606 210,608 222,612 235,615 248,618 256,626 268,639 280,648 290,651 298,650 310,646 322,637 335,625 348,613 358,603 368,593 376,585 384,580 392,579 400,580 410,586 420,592 435,601 450,607 470,612 484,618 500,625 515,630 540,631 570,630 585,634 610,637 640,637 655,632 665,631 680,633 700,638 730,647 755,654 768,651 785,640 800,627 815,616 827,615 840,618 855,627 870,634 890,635 913,634";

const months = [[12, "7月"], [23, "17"], [34, "8月"], [55, "9月"], [74, "10月"], [85, "17"], [96, "11月"], [116, "12月"], [137, "2025"], [156, "2月"], [174, "3月"]];

const prices = [["1,120.0", 104], ["1,080.0", 136], ["1,040.0", 168], ["760.0", 393], ["720.0", 426], ["680.0", 458],
  ["80.00", 526], ["60.00", 552], ["40.00", 578], ["20.00", 605]];

// [text, y, background, text colour, width]
const tags = [
  ["1,002.0", 199, "#ce93d8", "#131722", 43],
  ["958.8", 227, "#4dd0e1", "#131722", 34],
  ["924.9", 240, "#ffeb3b", "#131722", 34],
  ["915.6", 254, "#4caf50", "#fff", 34],
  ["910.4", 267, "#2962ff", "#fff", 34],
  ["901.5", 280, "#801922", "#fff", 34],
  ["898.8", 294, "#fff", "#131722", 34],
  ["897.9", 307, "#f23645", "#fff", 34],
  ["878.1", 320, "#ff9800", "#131722", 34],
  ["872.3", 333, "#4dd0e1", "#131722", 34],
  ["866.2", 347, "#808080", "#fff", 34],
  ["829.1", 360, "#ce93d8", "#131722", 34],
  ["20.47M", 492, "#26a69a", "#fff", 42],
  ["49.92", 565, "#9c27b0", "#fff", 34],
  ["0.43", 630, "#26a69a", "#fff", 29],
  ["−2.31", 643, "#0a8ff7", "#fff", 34],
  ["−2.73", 656, "#ff6d00", "#fff", 34]
];

function line(points, color, w) {
  out += `<polyline class="line" points="${points}" stroke="${color}" stroke-width="${w}"/>`;
}
function band(a, b) {
  out += `<polygon class="band" points="${a} ${b.split(" ").reverse().join(" ")}"/>`;
}

// grid
let grid = "";
for (let y = 72; y < 519; y += 32.15) grid += `M${LEFT} ${Math.round(y) + 0.5}H${AXIS}`;
for (const y of [525.5, 552.5, 578.5, 604.5, 630.5, 657.5]) grid += `M${LEFT} ${y}H${AXIS}`;
for (const [i] of months) grid += `M${Math.floor(barX(i)) + 0.5} ${TOP}V676`;
out += `<path class="grid" d="${grid}"/>`;

// price pane
band(upper, upper1);
band(lower1, lower);
volumes.forEach((v, i) => {
  const y = +v.slice(1);
  out += `<rect class="${v[0] === "g" ? "vol-up" : "vol-down"}" x="${(barX(i) - 2.6).toFixed(1)}" y="${y}" width="5.400" height="${519 - y}"/>`;
});
line(upper, "#66506f", 1);
line(lower, "#66506f", 1);
line(upper1, "#25534f", 1);
line(lower1, "#25534f", 1);
candles.forEach((c, i) => {
  const [hi, top, bottom, lo] = c.slice(1).split(",").map(Number);
  const x = Math.floor(barX(i)) + 0.5;
  if (c[0] === "u") {
    out += `<path class="candle-up" d="M${x} ${hi}V${top}M${x} ${bottom}V${lo}M${x - 2} ${top + 0.5}h4V${bottom - 0.5}h-4z"/>`;
  } else {
    out += `<path class="wick-down" d="M${x} ${hi}V${lo}"/><rect class="candle-down" x="${x - 2}" y="${top}" width="4" height="${bottom - top}"/>`;
  }
});
for (const [color, w, points] of averages) line(points, color, w);
out += '<g class="dots">' + sar.split(" ").map(p => {
  const [x, y] = p.split(",");
  return `<circle cx="${x}" cy="${y}" r="0.800"/>`;
}).join("") + "</g>";

// earnings marks
for (const x of [280, 656]) {
  out += `<path d="M${x - 6} 503h13v10l-6.500 4-6.500-4z" fill="#131722" stroke="#c2303f" stroke-width="1.200"/>
    <text class="event" x="${x + 0.5}" y="513" style="fill:#e03444">E</text>`;
}
out += `<rect x="1013.500" y="502.500" width="13" height="13" rx="1" fill="#131722" stroke="#a81ac0" stroke-width="1.500"/>
  <text class="event" x="1020" y="512" style="fill:#a81ac0">E</text>`;
out += `<path d="M${LEFT} 519.500H${RIGHT}" stroke="#2a2e39"/>`;

// rsi and macd pane
out += `<rect x="${LEFT}" y="539" width="${AXIS - LEFT}" height="52" fill="rgba(126, 40, 160, 0.14)" stroke="none"/>
  <path d="M${LEFT} 538.500H${AXIS}M${LEFT} 591.500H${AXIS}" stroke="#6d707b" stroke-dasharray="3 3"/>`;
const histColor = { T: "#26a69a", t: "#b2dfdb", R: "#f05350", p: "#fccbd0" };
hist.forEach((h, i) => {
  const v = +h.slice(1);
  const y = h[0] === "T" || h[0] === "t" ? 631 - v : 630;
  out += `<rect x="${(barX(i) - 2.6).toFixed(1)}" y="${y}" width="5.400" height="${v}" fill="${histColor[h[0]]}" stroke="none"/>`;
});
line(rsi, "#86269a", 1.1);
line(macd, "#1c82d4", 1.1);
line(signal, "#c9651c", 1.1);

// axes
for (const [text, y] of prices) out += `<text x="1122" y="${y + 3}">${text}</text>`;
for (const [text, y, bg, color, w] of tags) {
  out += `<rect x="1115" y="${y - 6.5}" width="${w}" height="13" fill="${bg}" stroke="none"/>
    <text class="tag-text" x="1122" y="${y + 3}" style="fill:${color}">${text}</text>`;
}
out += `<rect x="1088" y="273.500" width="27" height="13" fill="#801922" stroke="none"/>
  <text class="tag-text" x="1091" y="283" style="fill:#fff">4755</text>`;
for (const [i, text] of months) {
  out += `<text class="time${text === "2025" ? " year" : ""}" x="${Math.round(barX(i))}" y="693">${text}</text>`;
}
out += `<g stroke="#b2b5be"><path d="M1136 685h6l3 5-3 5h-6l-3-5z"/><circle cx="1139" cy="690" r="1.500"/></g>`;

svg.innerHTML = out;
```
